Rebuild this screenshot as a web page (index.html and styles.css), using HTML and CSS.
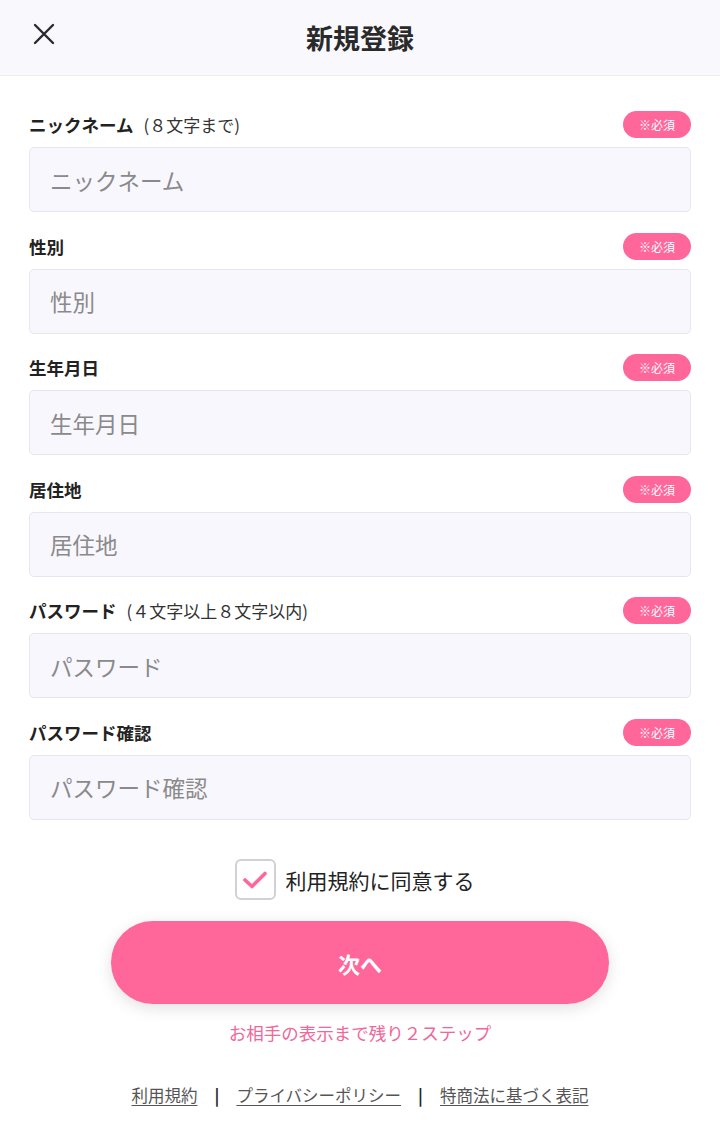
FILE: index.html
```html
<!DOCTYPE html>
<html lang="ja">
<head>
  <meta charset="UTF-8">
  <meta name="viewport" content="width=device-width, initial-scale=1.0">
  <title>新規登録</title>
  <link rel="stylesheet" href="styles.css">
</head>
<body>
  <header class="topbar">
    <button class="close-btn" aria-label="閉じる">
      <svg width="22" height="22" viewBox="0 0 22 22"><path d="M2 2 L20 20 M20 2 L2 20" stroke="#2a2a2a" stroke-width="2.4" stroke-linecap="round"/></svg>
    </button>
    <h1 class="title">新規登録</h1>
  </header>

  <main class="form">
    <div class="field">
      <div class="field-head">
        <label class="label">ニックネーム<span class="note">(８文字まで)</span></label>
        <span class="badge">※必須</span>
      </div>
      <input class="input" type="text" placeholder="ニックネーム">
    </div>
    <div class="field">
      <div class="field-head">
        <label class="label">性別</label>
        <span class="badge">※必須</span>
      </div>
      <input class="input" type="text" placeholder="性別">
    </div>
    <div class="field">
      <div class="field-head">
        <label class="label">生年月日</label>
        <span class="badge">※必須</span>
      </div>
      <input class="input" type="text" placeholder="生年月日">
    </div>
    <div class="field">
      <div class="field-head">
        <label class="label">居住地</label>
        <span class="badge">※必須</span>
      </div>
      <input class="input" type="text" placeholder="居住地">
    </div>
    <div class="field">
      <div class="field-head">
        <label class="label">パスワード<span class="note">(４文字以上８文字以内)</span></label>
        <span class="badge">※必須</span>
      </div>
      <input class="input" type="password" placeholder="パスワード">
    </div>
    <div class="field">
      <div class="field-head">
        <label class="label">パスワード確認</label>
        <span class="badge">※必須</span>
      </div>
      <input class="input" type="password" placeholder="パスワード確認">
    </div>

    <div class="agree">
      <span class="checkbox">
        <svg width="26" height="20" viewBox="0 0 26 20"><path d="M3 10 L10 16.5 L23 3.5" fill="none" stroke="#ff6699" stroke-width="3.6" stroke-linecap="round" stroke-linejoin="round"/></svg>
      </span>
      <span class="agree-text">利用規約に同意する</span>
    </div>

    <button class="next-btn">次へ</button>
    <p class="steps">お相手の表示まで残り２ステップ</p>
  </main>

  <footer class="footer">
    <a href="#">利用規約</a>
    <span class="sep">|</span>
    <a href="#">プライバシーポリシー</a>
    <span class="sep">|</span>
    <a href="#">特商法に基づく表記</a>
  </footer>
</body>
</html>
```

FILE: styles.css
```css
body, html {
  margin: 0;
  padding: 0;
  background: #fff;
  color: #222;
  font-family: "Noto Sans CJK JP", "Noto Sans", sans-serif;
}
.topbar {
  position: relative;
  height: 75px;
  background: #f9f8fd;
  border-bottom: 1px solid #ebebf0;
  display: flex;
  align-items: center;
  justify-content: center;
}
.close-btn {
  position: absolute;
  left: 33px;
  top: 23px;
  padding: 0;
  border: none;
  background: none;
  line-height: 0;
}
.title {
  margin: 0;
  font-size: 27px;
  font-weight: bold;
  color: #2a2a2a;
}
.form {
  padding: 35px 29px 0 29px;
  display: flex;
  flex-direction: column;
}
.field {
  display: flex;
  flex-direction: column;
  margin-bottom: 20.5px;
}
.field-head {
  display: flex;
  align-items: center;
  justify-content: space-between;
  height: 27px;
  margin-bottom: 9px;
}
.label {
  font-size: 17.5px;
  font-weight: bold;
  color: #222;
}
.note {
  font-weight: normal;
  margin-left: 10px;
  color: #333;
  font-size: 17px;
}
.badge {
  width: 68px;
  height: 27px;
  border-radius: 14px;
  background: #ff6699;
  color: #fff;
  font-size: 12px;
  display: flex;
  align-items: center;
  justify-content: center;
}
.input {
  box-sizing: border-box;
  height: 65px;
  padding: 0 20px;
  border: 1px solid #e6e6ee;
  border-radius: 5px;
  background: #f8f7fd;
  font-family: inherit;
  font-size: 22.5px;
  color: #333;
  outline: none;
}
.input::placeholder {
  color: #8a8a8a;
}
.agree {
  display: flex;
  align-items: center;
  justify-content: center;
  margin-top: 19px;
  padding-right: 11px;
  gap: 10px;
}
.checkbox {
  box-sizing: border-box;
  width: 41px;
  height: 41px;
  border: 2px solid #d0d0d8;
  border-radius: 6px;
  background: #fff;
  display: flex;
  align-items: center;
  justify-content: center;
}
.agree-text {
  font-size: 21px;
  color: #222;
}
.next-btn {
  align-self: center;
  width: 498px;
  height: 83px;
  margin-top: 21px;
  border: none;
  border-radius: 42px;
  background: #ff6699;
  color: #fff;
  font-family: inherit;
  font-size: 22px;
  font-weight: bold;
  box-shadow: 0 4px 16px rgba(0, 0, 0, 0.12);
}
.steps {
  margin: 16px 0 0 0;
  text-align: center;
  font-size: 17.5px;
  color: #f0679a;
}
.footer {
  display: flex;
  justify-content: center;
  align-items: center;
  gap: 17px;
  margin-top: 38px;
  font-size: 16.5px;
}
.footer a {
  color: #555;
  text-decoration: underline;
  text-underline-offset: 3px;
}
.sep {
  color: #222;
  font-weight: bold;
}
```
